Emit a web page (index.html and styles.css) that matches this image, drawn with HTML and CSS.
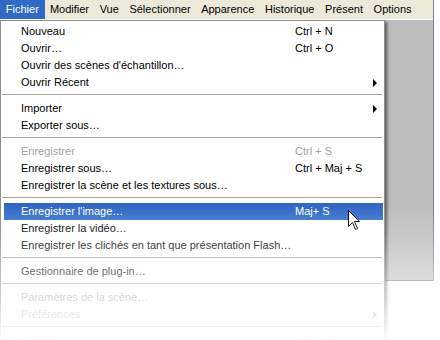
FILE: index.html
```html
<!DOCTYPE html>
<html lang="fr">
<head>
<meta charset="utf-8">
<title>Fichier</title>
<link rel="stylesheet" href="styles.css">
</head>
<body>
<div class="screen">
  <div class="window">
    <nav class="menubar">
      <span class="mb-item active">Fichier</span>
      <span class="mb-item">Modifier</span>
      <span class="mb-item">Vue</span>
      <span class="mb-item">Sélectionner</span>
      <span class="mb-item">Apparence</span>
      <span class="mb-item">Historique</span>
      <span class="mb-item">Présent</span>
      <span class="mb-item">Options</span>
    </nav>
    <div class="workspace"></div>
  </div>

  <div class="menu">
    <div class="item"><span>Nouveau</span><span>Ctrl + N</span></div>
    <div class="item"><span>Ouvrir…</span><span>Ctrl + O</span></div>
    <div class="item"><span>Ouvrir des scènes d'échantillon…</span><span></span></div>
    <div class="item"><span>Ouvrir Récent</span><span></span><i class="arrow"></i></div>
    <div class="sep"></div>
    <div class="item"><span>Importer</span><span></span><i class="arrow"></i></div>
    <div class="item"><span>Exporter sous…</span><span></span></div>
    <div class="sep"></div>
    <div class="item disabled"><span>Enregistrer</span><span>Ctrl + S</span></div>
    <div class="item"><span>Enregistrer sous…</span><span>Ctrl + Maj + S</span></div>
    <div class="item"><span>Enregistrer la scène et les textures sous…</span><span></span></div>
    <div class="sep"></div>
    <div class="item hover"><span>Enregistrer l'image…</span><span>Maj+ S</span></div>
    <div class="item"><span>Enregistrer la vidéo…</span><span></span></div>
    <div class="item"><span>Enregistrer les clichés en tant que présentation Flash…</span><span></span></div>
    <div class="sep"></div>
    <div class="item"><span>Gestionnaire de plug-in…</span><span></span></div>
    <div class="sep"></div>
    <div class="item disabled"><span>Paramètres de la scène…</span><span></span></div>
    <div class="item disabled"><span>Préférences</span><span></span><i class="arrow"></i></div>
    <div class="sep"></div>
    <div class="item disabled"><span>Fermer</span><span>Ctrl + W</span></div>
  </div>

  <svg class="cursor" width="13" height="21" viewBox="0 0 13 21">
    <path d="M0.5 0.5 L0.5 16.5 L4.5 12.5 L7.5 19.5 L9.5 18.5 L6.5 11.5 L11.5 11.5 Z" fill="#fff" stroke="#000" stroke-width="1" stroke-linejoin="miter"/>
  </svg>

  <div class="fade"></div>
</div>
</body>
</html>
```

FILE: styles.css
```css
* { box-sizing: border-box; }

html, body {
  margin: 0;
  padding: 0;
  background: #fff;
}

.screen {
  position: relative;
  width: 440px;
  height: 340px;
  overflow: hidden;
  font-family: "Liberation Sans", Arial, sans-serif;
  font-size: 11px;
  color: #000;
}

.window {
  width: 434px;
  border-right: 1px solid #70829c;
}

.menubar {
  display: flex;
  height: 20px;
  background: #ECE9D8;
  border-bottom: 1px solid #fff;
}

.mb-item {
  padding: 0 5.3px;
  line-height: 19px;
  height: 19px;
  white-space: nowrap;
}

.mb-item.active {
  padding: 0 5.8px;
  background: #316AC5;
  color: #fff;
}

.workspace {
  height: 261px;
  background: #BEBEBE;
  border-bottom: 1px solid #70829c;
}

.menu {
  position: absolute;
  left: 0;
  top: 20px;
  width: 385px;
  background: #fff;
  border: 1px solid #8e8e8e;
  padding: 2px 0;
  box-shadow: 2px 2px 3px rgba(0, 0, 0, 0.55);
}

.item {
  display: grid;
  grid-template-columns: 274px 1fr 4px;
  align-items: center;
  height: 17px;
  line-height: 17px;
  margin: 0 1px 0 3px;
  padding: 0 6px 0 17px;
  white-space: nowrap;
}

.item.disabled {
  color: #a2a2a2;
}

.item.hover {
  background: linear-gradient(#2f66c4, #3a72cc);
  color: #fff;
}

.arrow {
  display: block;
  width: 0;
  height: 0;
  border-left: 4px solid #000;
  border-top: 4px solid transparent;
  border-bottom: 4px solid transparent;
}

.item.disabled .arrow {
  border-left-color: #a2a2a2;
}

.sep {
  height: 9px;
  padding-top: 3px;
  margin: 0 2px 0 1px;
}

.sep::before {
  content: "";
  display: block;
  height: 1px;
  background: #ACA899;
}

.cursor {
  position: absolute;
  left: 348px;
  top: 210px;
}

.fade {
  position: absolute;
  left: 0;
  top: 0;
  width: 440px;
  height: 340px;
  pointer-events: none;
  background: linear-gradient(to bottom,
    rgba(255,255,255,0) 0,
    rgba(255,255,255,0) 205px,
    rgba(255,255,255,0.15) 235px,
    rgba(255,255,255,0.42) 272px,
    rgba(255,255,255,0.62) 300px,
    rgba(255,255,255,0.8) 320px,
    rgba(255,255,255,0.97) 340px);
}
```
